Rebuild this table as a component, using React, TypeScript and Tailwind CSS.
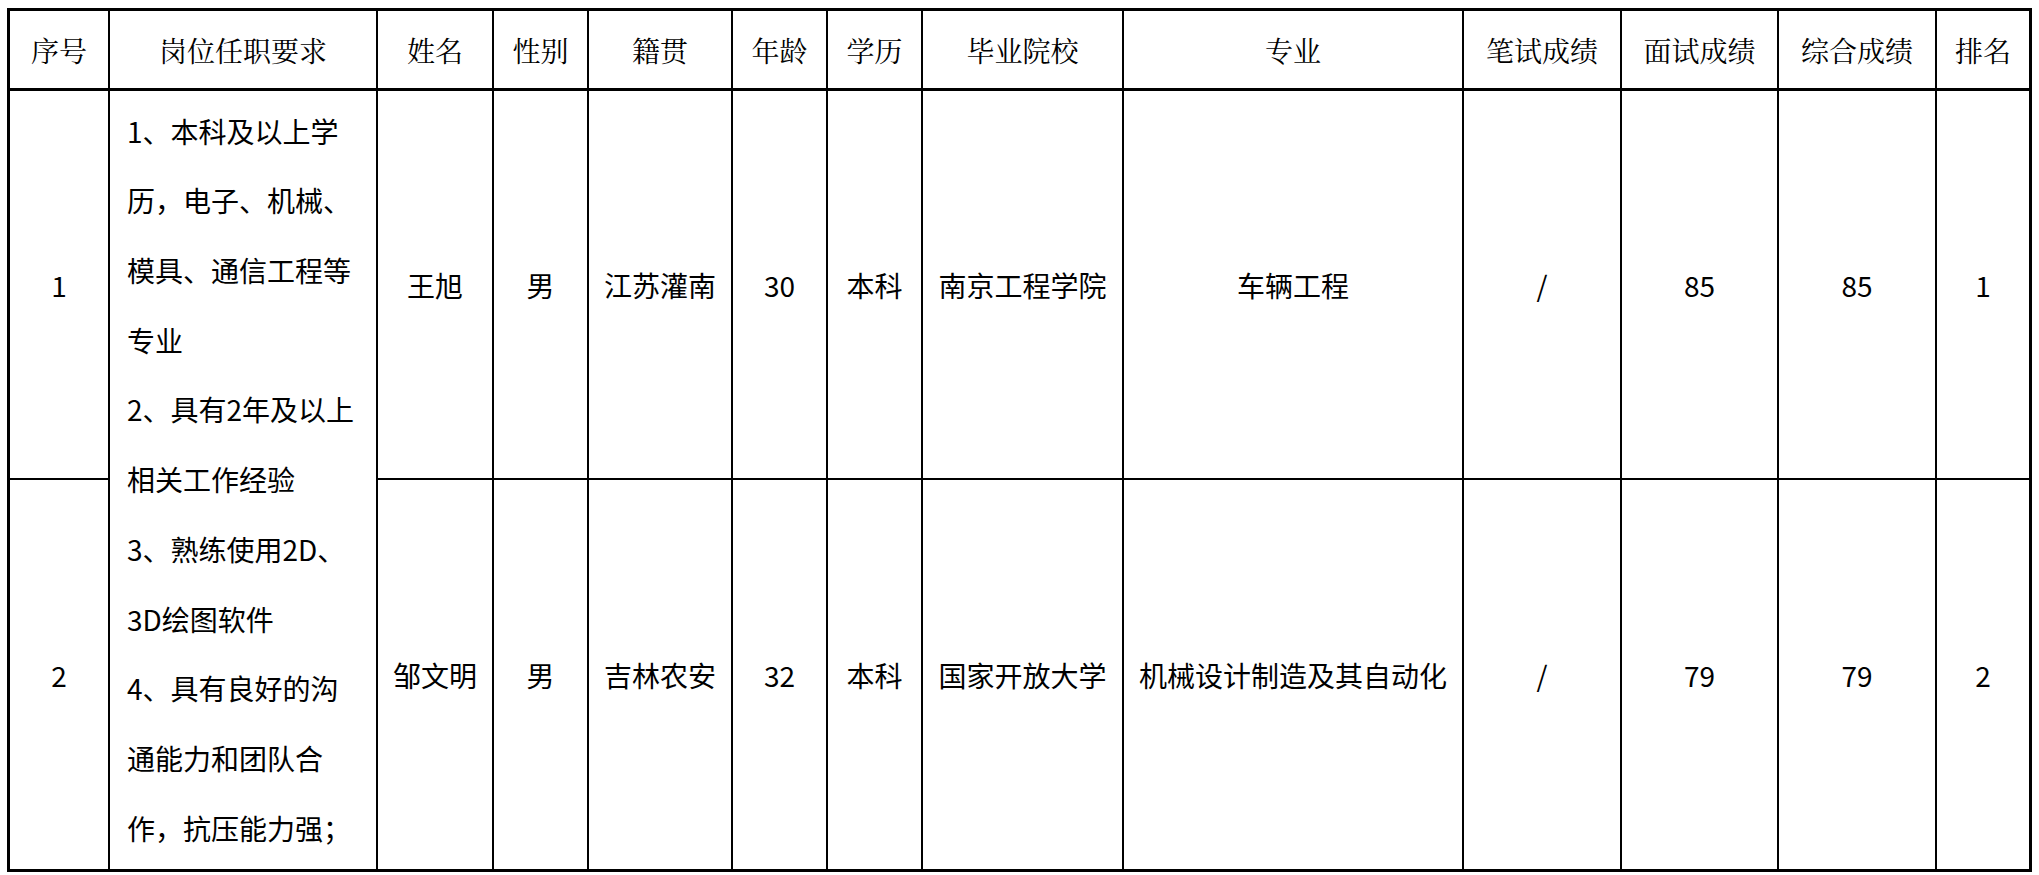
import React from "react";

const cols = "grid-cols-[100px_268px_116px_95px_144px_95px_95px_201px_340px_158px_157px_158px_92px]";

const headers = ["序号", "岗位任职要求", "姓名", "性别", "籍贯", "年龄", "学历", "毕业院校", "专业", "笔试成绩", "面试成绩", "综合成绩", "排名"];

const reqLines = [
  "1、本科及以上学",
  "历，电子、机械、",
  "模具、通信工程等",
  "专业",
  "2、具有2年及以上",
  "相关工作经验",
  "3、熟练使用2D、",
  "3D绘图软件",
  "4、具有良好的沟",
  "通能力和团队合",
  "作，抗压能力强；",
];

const rows = [
  ["1", "王旭", "男", "江苏灌南", "30", "本科", "南京工程学院", "车辆工程", "/", "85", "85", "1"],
  ["2", "邹文明", "男", "吉林农安", "32", "本科", "国家开放大学", "机械设计制造及其自动化", "/", "79", "79", "2"],
];

export default function App() {
  const font = { fontFamily: '"Noto Sans CJK SC", "Noto Sans", sans-serif' };
  const headFont = { fontFamily: '"Noto Serif CJK SC", "Noto Serif SC", "Noto Sans CJK SC", serif' };
  return (
    <div className="w-[2039px] h-[875px] bg-white pl-[7px] pt-[8px] text-black" style={font}>
      <div className={`grid ${cols} grid-rows-[80px_389px_389px] w-[2025px] border-[3px] border-black`}>
        {headers.map((h, i) => (
          <div
            key={h}
            style={headFont}
            className={`flex items-center justify-center text-[28px] border-b-[3px] border-black ${i < 12 ? "border-r-2" : ""}`}
          >
            {h}
          </div>
        ))}
        {rows.map((r, ri) => (
          <React.Fragment key={ri}>
            <div className={`flex items-center justify-center text-[28px] border-r-2 border-black ${ri === 0 ? "border-b-2" : ""}`}>
              {r[0]}
            </div>
            {ri === 0 && (
              <div className="row-span-2 flex flex-col justify-center pl-[17px] text-[28px] leading-[69.7px] border-r-2 border-black whitespace-nowrap">
                {reqLines.map((l) => (
                  <div key={l}>{l}</div>
                ))}
              </div>
            )}
            {r.slice(1).map((c, ci) => (
              <div
                key={ci}
                className={`flex items-center justify-center text-[28px] border-black whitespace-nowrap ${ci < 10 ? "border-r-2" : ""} ${ri === 0 ? "border-b-2" : ""}`}
              >
                {c}
              </div>
            ))}
          </React.Fragment>
        ))}
      </div>
    </div>
  );
}
